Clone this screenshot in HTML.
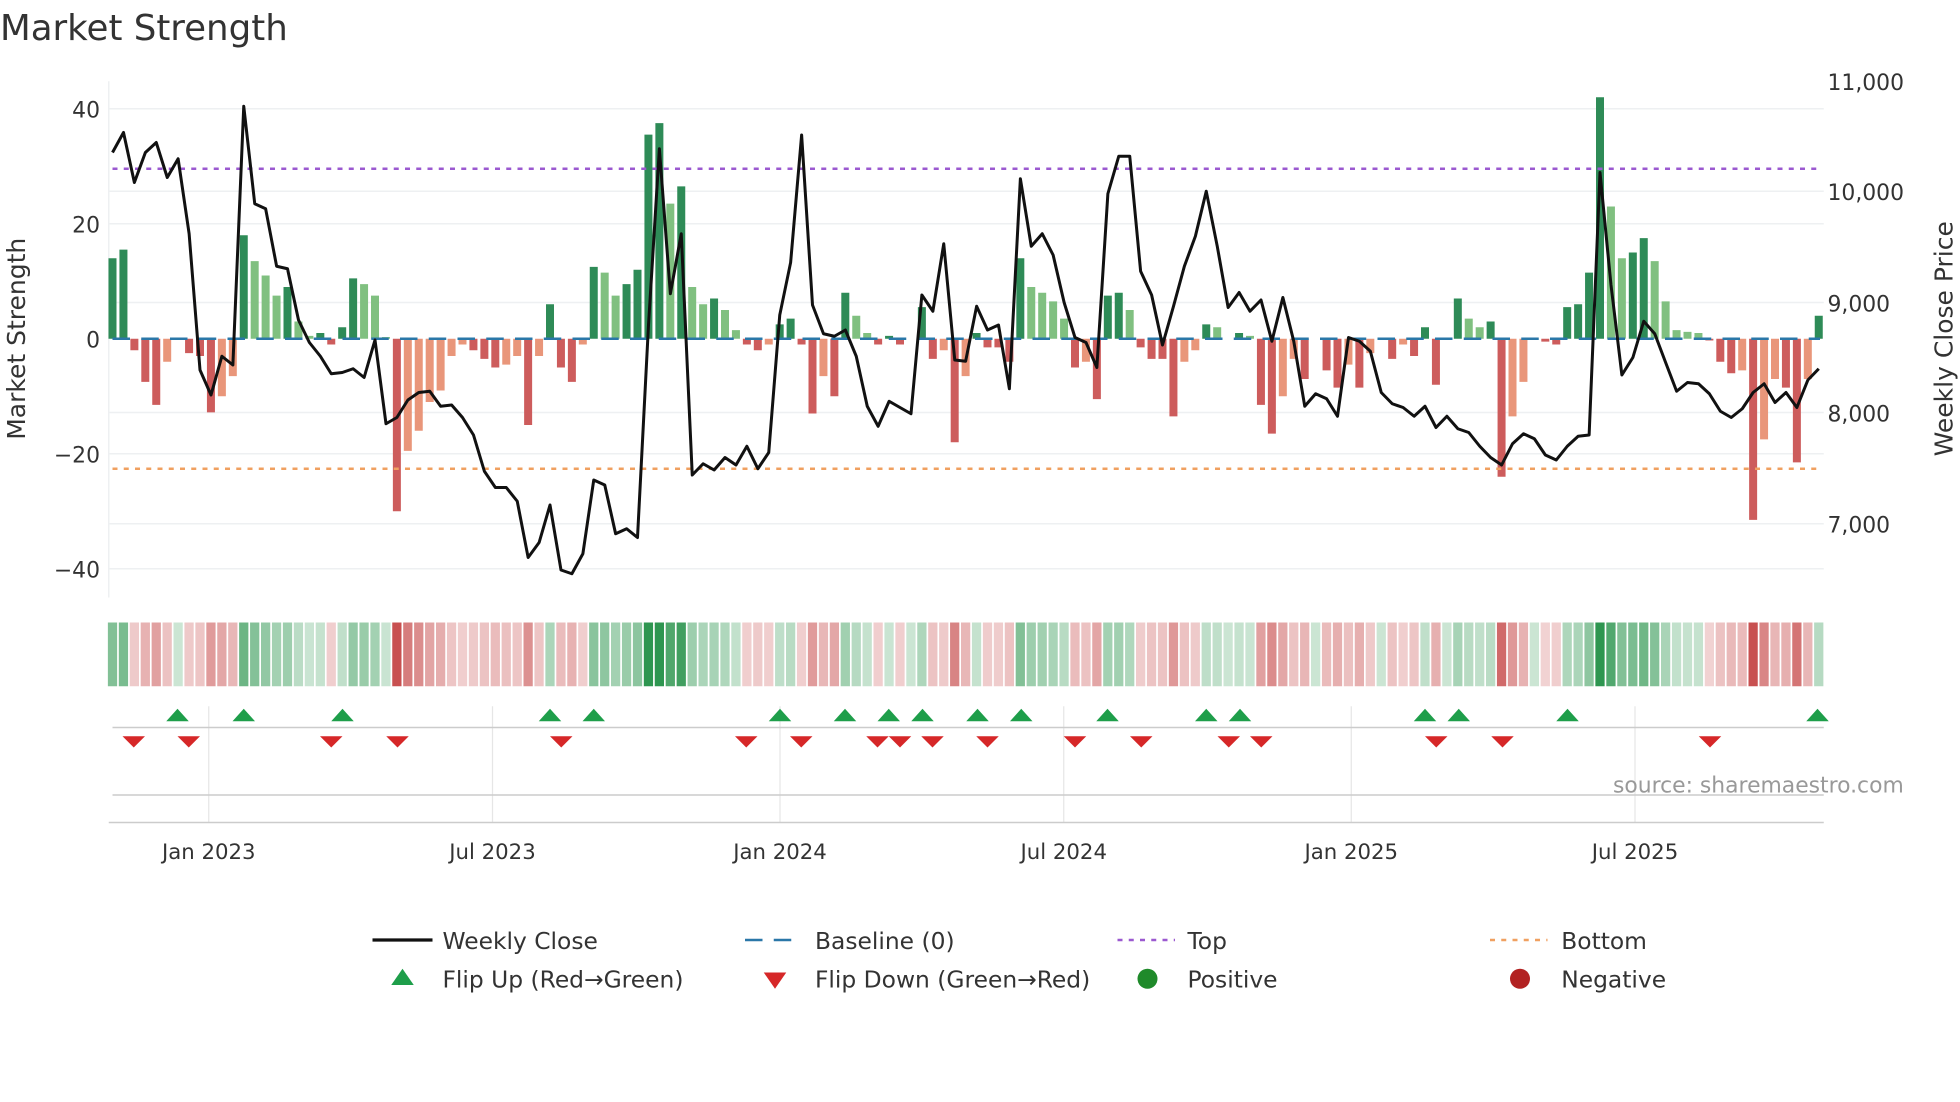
<!DOCTYPE html>
<html><head><meta charset="utf-8"><style>
html,body{margin:0;padding:0;background:#fff;}
svg{display:block;}
text{font-family:"DejaVu Sans","Liberation Sans",sans-serif;fill:#333;}
</style></head><body>
<svg id="s" width="1960" height="1102" viewBox="0 0 1568 881.6" xmlns="http://www.w3.org/2000/svg">
<rect width="1568" height="882" fill="#fff"/>
<text x="0" y="32" font-size="28.5">Market Strength</text>
<g id="grid" stroke="#eef0f2" stroke-width="1.2">
<line x1="87" x2="1459" y1="87" y2="87"/><line x1="87" x2="1459" y1="179" y2="179"/>
<line x1="87" x2="1459" y1="363" y2="363"/><line x1="87" x2="1459" y1="455" y2="455"/>
<line x1="87" x2="1459" y1="153" y2="153"/><line x1="87" x2="1459" y1="242" y2="242"/>
<line x1="87" x2="1459" y1="330" y2="330"/><line x1="87" x2="1459" y1="419" y2="419"/>
<line x1="87" x2="87" y1="65" y2="478"/>
</g>
<g font-size="17.5" text-anchor="end">
<text x="80" y="94">40</text><text x="80" y="186">20</text><text x="80" y="278">0</text>
<text x="80" y="370">−20</text><text x="80" y="462">−40</text>
</g>
<g font-size="17.5">
<text x="1462" y="72">11,000</text><text x="1462" y="160">10,000</text><text x="1462" y="249">9,000</text>
<text x="1462" y="337">8,000</text><text x="1462" y="426">7,000</text>
</g>
<text font-size="20" text-anchor="middle" transform="translate(20,271) rotate(-90)">Market Strength</text>
<text font-size="20" text-anchor="middle" transform="translate(1562,271) rotate(-90)">Weekly Close Price</text>
<g id="bars"></g>
<line x1="90" x2="1456" y1="271" y2="271" stroke="#2a77a8" stroke-width="2" stroke-dasharray="14,9"/>
<line x1="90" x2="1456" y1="135" y2="135" stroke="#9b59d0" stroke-width="2" stroke-dasharray="4,5"/>
<line x1="90" x2="1456" y1="375" y2="375" stroke="#f0a060" stroke-width="2" stroke-dasharray="4,5"/>
<polyline id="price" fill="none" stroke="#111" stroke-width="2.4" stroke-linejoin="round"/>
<g id="strip"></g>
<g stroke="#e6e6e6" stroke-width="1">
<line x1="167" x2="167" y1="565" y2="658"/><line x1="394" x2="394" y1="565" y2="658"/>
<line x1="624" x2="624" y1="565" y2="658"/><line x1="851" x2="851" y1="565" y2="658"/>
<line x1="1081" x2="1081" y1="565" y2="658"/><line x1="1308" x2="1308" y1="565" y2="658"/>
</g>
<line x1="90" x2="1459" y1="582" y2="582" stroke="#ccc" stroke-width="1.2"/>
<line x1="90" x2="1459" y1="636" y2="636" stroke="#ccc" stroke-width="1.2"/>
<line x1="87" x2="1459" y1="658" y2="658" stroke="#ccc" stroke-width="1.2"/>
<g id="tri"></g>
<text x="1523" y="634" font-size="17.5" text-anchor="end" style="fill:#999">source: sharemaestro.com</text>
<g font-size="17" text-anchor="middle">
<text x="167" y="687">Jan 2023</text><text x="394" y="687">Jul 2023</text><text x="624" y="687">Jan 2024</text>
<text x="851" y="687">Jul 2024</text><text x="1081" y="687">Jan 2025</text><text x="1308" y="687">Jul 2025</text>
</g>
<g font-size="18.7">
<line x1="298" x2="346" y1="752" y2="752" stroke="#111" stroke-width="2.6"/>
<text x="354" y="759">Weekly Close</text>
<line x1="596" x2="642" y1="752" y2="752" stroke="#2a77a8" stroke-width="2" stroke-dasharray="14,9"/>
<text x="652" y="759">Baseline (0)</text>
<line x1="894" x2="940" y1="752" y2="752" stroke="#9b59d0" stroke-width="2" stroke-dasharray="4,5"/>
<text x="950" y="759">Top</text>
<line x1="1192" x2="1238" y1="752" y2="752" stroke="#f0a060" stroke-width="2" stroke-dasharray="4,5"/>
<text x="1249" y="759">Bottom</text>
<polygon points="313,788 331,788 322,775" fill="#1e9e4a"/>
<text x="354" y="790">Flip Up (Red→Green)</text>
<polygon points="611,778 629,778 620,791" fill="#d62728"/>
<text x="652" y="790">Flip Down (Green→Red)</text>
<circle cx="918" cy="783" r="8" fill="#1f8a2a"/>
<text x="950" y="790">Positive</text>
<circle cx="1216" cy="783" r="8" fill="#b22222"/>
<text x="1249" y="790">Negative</text>
</g>
</svg>
<script>
var V=[14,15.5,-2,-7.5,-11.5,-4,0,-2.5,-3,-12.8,-10,-6.5,18,13.5,11,7.5,9,3,0.5,1,-1,2,10.5,9.5,7.5,0.3,-30,-19.5,-16,-11,-9,-3,-1,-2,-3.5,-5,-4.5,-3,-15,-3,6,-5,-7.5,-1,12.5,11.5,7.5,9.5,12,35.5,37.5,23.5,26.5,9,6,7,5,1.5,-1,-2,-1,2.5,3.5,-1,-13,-6.5,-10,8,4,1,-1,0.5,-1,0,5.5,-3.5,-2,-18,-6.5,1,-1.5,-1.5,-4,14,9,8,6.5,3.5,-5,-4,-10.5,7.5,8,5,-1.5,-3.5,-3.5,-13.5,-4,-2,2.5,2,0,1,0.5,-11.5,-16.5,-10,-3.5,-7,0,-5.5,-8.5,-4.5,-8.5,-2.5,0,-3.5,-1,-3,2,-8,0,7,3.5,2,3,-24,-13.5,-7.5,0,-0.5,-1,5.5,6,11.5,42,23,14,15,17.5,13.5,6.5,1.5,1.2,1,-0.3,-4,-6,-5.5,-31.5,-17.5,-7,-8.5,-21.5,-7,4];
var P=[122,106,146,122,114,142,127,187,296,316,285,292,85,163,167,213,215,256,274,285,299,298,295,302,272,339,334,320,314,313,325,324,334,348,377,390,390,401,446,434,404,456,459,443,384,388,427,423,430,260,119,235,187,380,371,376,366,372,357,375,362,252,210,108,244,267,269,264,285,325,341,321,326,331,236,249,195,288,289,245,264,260,311,143,197,187,204,242,270,274,294,155,125,125,217,236,276,245,213,189,153,197,246,234,249,240,273,238,273,325,315,319,333,270,273,281,314,323,326,333,325,342,333,343,346,357,366,372,355,347,351,364,368,357,349,348,138,228,300,286,257,267,290,313,306,307,315,329,334,327,314,307,322,314,326,304,295];
var NS="http://www.w3.org/2000/svg";
function el(p,t,a){var e=document.createElementNS(NS,t);for(var k in a)e.setAttribute(k,a[k]);document.getElementById(p).appendChild(e);return e;}
var n=V.length,step=(1455-90)/(n-1);
var pts=[];
for(var i=0;i<n;i++){
 var x=90+i*step,v=V[i],h=v*4.6;
 var prev=i>0?V[i-1]:0;
 var c;
 if(v>=0)c=(v>=prev)?"#2e8b57":"#80c080";else c=(v<=prev)?"#cd5c5c":"#e9967a";
 if(Math.abs(h)>0.3)el("bars","rect",{x:x-3.2,y:v>=0?271-h:271,width:6.4,height:Math.abs(h),fill:c});
 var s=v,a=Math.min(Math.abs(s)/30,1)*0.75+0.25;
 var fc=s>=0?"rgba(46,150,80,"+a.toFixed(2)+")":"rgba(200,80,80,"+a.toFixed(2)+")";
 el("strip","rect",{x:x-3.7,y:498,width:7.4,height:51,fill:fc});
 if(i<P.length)pts.push(x.toFixed(1)+","+P[i]);
}
document.getElementById("price").setAttribute("points",pts.join(" "));
[142,195,274,440,475,624,676,711,738,782,817,886,965,992,1140,1167,1254,1454].forEach(function(x){el("tri","polygon",{points:(x-9)+",577 "+(x+9)+",577 "+x+",567",fill:"#1e9e4a"});});
[107,151,265,318,449,597,641,702,720,746,790,860,913,983,1009,1149,1202,1368].forEach(function(x){el("tri","polygon",{points:(x-9)+",589 "+(x+9)+",589 "+x+",598",fill:"#d62728"});});
</script>
</body></html>
